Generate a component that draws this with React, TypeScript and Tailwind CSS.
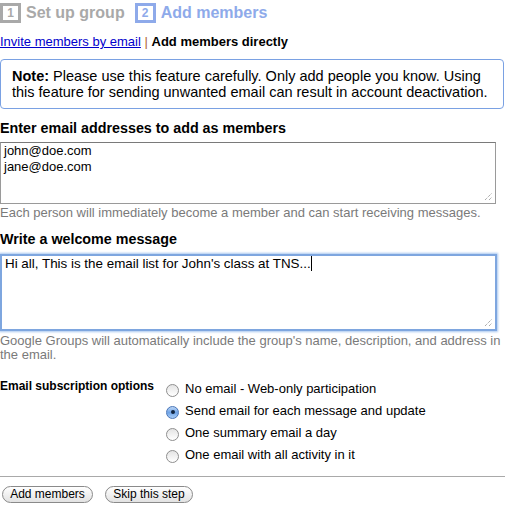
import React from "react";

function Grip() {
  return (
    <svg className="absolute right-[2px] bottom-[2px]" width="9" height="9" viewBox="0 0 9 9">
      <line x1="1" y1="8" x2="8" y2="1" stroke="#888" strokeWidth="1" strokeDasharray="1 1" />
      <line x1="5" y1="8" x2="8" y2="5" stroke="#888" strokeWidth="1" strokeDasharray="1 1" />
    </svg>
  );
}

function Radio({ checked }: { checked?: boolean }) {
  if (checked) {
    return (
      <span className="w-[13px] h-[13px] rounded-full border border-[#4a76b8] bg-gradient-to-b from-[#bcd6f5] via-[#6fa3e6] to-[#a9cdf6] flex items-center justify-center shrink-0">
        <span className="block w-[4px] h-[4px] rounded-full bg-[#10243f]" />
      </span>
    );
  }
  return (
    <span className="block w-[13px] h-[13px] rounded-full border border-[#8e8e8e] bg-gradient-to-b from-[#e4e4e4] to-[#ffffff] shrink-0" />
  );
}

const options = [
  { label: "No email - Web-only participation", checked: false },
  { label: "Send email for each message and update", checked: true },
  { label: "One summary email a day", checked: false },
  { label: "One email with all activity in it", checked: false },
];

export default function App() {
  return (
    <div className="w-[505px] h-[511px] bg-white text-black text-[13px] font-['Liberation_Sans',Arial,sans-serif] overflow-hidden">
      {/* Steps header */}
      <div className="flex items-center h-[24px] pt-[1px]">
        <span className="w-[21px] h-[20px] border-[3px] border-[#a9a9a9] flex items-center justify-center text-[12px] font-bold text-[#a9a9a9] leading-none">
          1
        </span>
        <span className="ml-[5px] text-[16px] font-bold text-[#a9a9a9] leading-none">Set up group</span>
        <span className="ml-[10px] w-[21px] h-[20px] border-[3px] border-[#8eaaea] flex items-center justify-center text-[12px] font-bold text-[#8eaaea] leading-none">
          2
        </span>
        <span className="ml-[5px] text-[16px] font-bold text-[#8eaaea] leading-none">Add members</span>
      </div>

      {/* Tabs line */}
      <div className="mt-[10px] leading-[16px]">
        <a className="text-[#0000cc] underline" href="#">Invite members by email</a>
        <span className="text-[#b0652f]"> | </span>
        <span className="font-bold">Add members directly</span>
      </div>

      {/* Note */}
      <div className="mt-[9px] w-[504px] border border-[#7aa1e3] rounded-[4px] px-[11px] py-[8px] text-[14.5px] leading-[16px]">
        <span className="font-bold">Note:</span> Please use this feature carefully. Only add people you know. Using this feature for sending unwanted email can result in account deactivation.
      </div>

      {/* Email addresses */}
      <div className="mt-[11px] text-[14.3px] font-bold leading-[16px]">Enter email addresses to add as members</div>
      <div className="relative mt-[6px] w-[496px] h-[62px] border border-[#9a9a9a] border-t-[#7a7a7a] px-[3px] leading-[16px]">
        <div>john@doe.com</div>
        <div>jane@doe.com</div>
        <Grip />
      </div>
      <div className="mt-[1px] leading-[16px] text-[#7a7a7a]">
        Each person will immediately become a member and can start receiving messages.
      </div>

      {/* Welcome message */}
      <div className="mt-[10px] text-[14.3px] font-bold leading-[16px]">Write a welcome message</div>
      <div className="relative mt-[7px] w-[497px] h-[77px] border-2 border-[#7ea6df] shadow-[0_0_2px_1px_#a9c7ef] px-[3px] text-[13.4px] leading-[16px]">
        <span>Hi all, This is the email list for John's class at TNS...</span>
        <span className="inline-block w-[1px] h-[15px] bg-black align-[-3px]" />
        <Grip />
      </div>
      <div className="mt-[3px] leading-[14px] text-[#7a7a7a]">
        Google Groups will automatically include the group's name, description, and address in the email.
      </div>

      {/* Subscription options */}
      <div className="mt-[16px] flex">
        <div className="w-[166px] shrink-0 text-[12px] font-bold leading-[16px]">Email subscription options</div>
        <div className="flex flex-col">
          {options.map((o) => (
            <div key={o.label} className="h-[22px] flex items-center gap-[6px]">
              <span className="block mt-[2px]">
                <Radio checked={o.checked} />
              </span>
              <span className="leading-[16px]">{o.label}</span>
            </div>
          ))}
        </div>
      </div>

      <div className="mt-[10px] h-[1px] bg-[#a9a9a9] w-[505px]" />

      <div className="mt-[9px] flex gap-[12px] pl-[2px]">
        <button className="w-[91px] h-[17px] rounded-full border border-[#8a8a8a] bg-gradient-to-b from-white to-[#e2e2e2] text-[12px] leading-[15px] text-black">
          Add members
        </button>
        <button className="w-[88px] h-[17px] rounded-full border border-[#8a8a8a] bg-gradient-to-b from-white to-[#e2e2e2] text-[12px] leading-[15px] text-black">
          Skip this step
        </button>
      </div>
    </div>
  );
}
